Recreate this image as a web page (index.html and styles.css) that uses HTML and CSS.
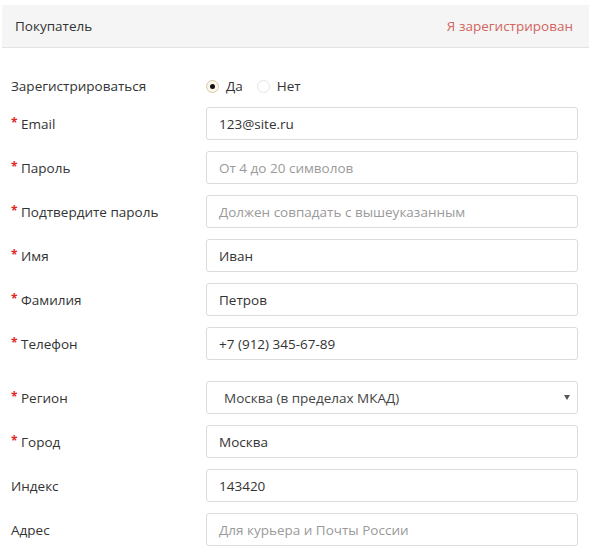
FILE: index.html
```html
<!DOCTYPE html>
<html lang="ru">
<head>
<meta charset="utf-8">
<title>Покупатель</title>
<link rel="stylesheet" href="styles.css">
</head>
<body>
<div class="panel">
  <div class="panel-head">
    <span class="title">Покупатель</span>
    <a class="login-link">Я зарегистрирован</a>
  </div>
  <form class="form">
    <div class="row row-radio">
      <label class="lbl">Зарегистрироваться</label>
      <div class="radios">
        <span class="radio checked"></span><span class="radio-text">Да</span>
        <span class="radio"></span><span class="radio-text">Нет</span>
      </div>
    </div>
    <div class="row">
      <label class="lbl"><span class="req">*</span>Email</label>
      <div class="input">123@site.ru</div>
    </div>
    <div class="row">
      <label class="lbl"><span class="req">*</span>Пароль</label>
      <div class="input ph">От 4 до 20 символов</div>
    </div>
    <div class="row">
      <label class="lbl"><span class="req">*</span>Подтвердите пароль</label>
      <div class="input ph">Должен совпадать с вышеуказанным</div>
    </div>
    <div class="row">
      <label class="lbl"><span class="req">*</span>Имя</label>
      <div class="input">Иван</div>
    </div>
    <div class="row">
      <label class="lbl"><span class="req">*</span>Фамилия</label>
      <div class="input">Петров</div>
    </div>
    <div class="row">
      <label class="lbl"><span class="req">*</span>Телефон</label>
      <div class="input">+7 (912) 345-67-89</div>
    </div>
    <div class="row row-select">
      <label class="lbl"><span class="req">*</span>Регион</label>
      <div class="select">Москва (в пределах МКАД)<span class="caret"></span></div>
    </div>
    <div class="row">
      <label class="lbl"><span class="req">*</span>Город</label>
      <div class="input">Москва</div>
    </div>
    <div class="row">
      <label class="lbl">Индекс</label>
      <div class="input">143420</div>
    </div>
    <div class="row">
      <label class="lbl">Адрес</label>
      <div class="input ph">Для курьера и Почты России</div>
    </div>
  </form>
</div>
</body>
</html>
```
FILE: styles.css
```css
html, body {
  margin: 0;
  padding: 0;
  background: #fff;
}
body {
  font-family: "Open Sans", "Noto Sans", sans-serif;
  font-size: 13.5px;
  color: #333;
}
.panel {
  padding: 5px 2px 0 2px;
}
.panel-head {
  height: 42px;
  background: #f5f5f5;
  border-bottom: 1px solid #e2e2e2;
  display: flex;
  align-items: center;
  justify-content: space-between;
  padding: 0 16px 0 13px;
}
.title {
  color: #333;
}
.login-link {
  color: #d2655e;
}
.form {
  display: flex;
  flex-direction: column;
  gap: 11px;
  padding: 29px 0 0 9px;
}
.row {
  display: grid;
  grid-template-columns: 195px 372px;
  align-items: center;
}
.row-radio {
  height: 16px;
  margin-bottom: 3px;
}
.row-select {
  margin-top: 10px;
}
.lbl {
  display: flex;
  align-items: center;
}
.req {
  color: #e3261f;
  font-weight: bold;
  width: 10px;
  font-size: 12px;
  position: relative;
  top: -1px;
}
.radios {
  display: flex;
  align-items: center;
}
.radio {
  width: 13px;
  height: 13px;
  border: 1px solid #e3e3e3;
  border-radius: 50%;
  background: #fff;
  box-sizing: border-box;
  position: relative;
  margin-right: 7px;
}
.radio.checked {
  border-color: #d8c8a8;
  background: #fbf6ea;
}
.radio.checked::after {
  content: "";
  position: absolute;
  left: 3px;
  top: 3px;
  width: 5px;
  height: 5px;
  border-radius: 50%;
  background: #111;
}
.radio-text {
  margin-right: 14px;
}
.input, .select {
  box-sizing: border-box;
  height: 33px;
  border: 1px solid #dcdcdc;
  border-radius: 3px;
  padding: 0 12px;
  display: flex;
  align-items: center;
  background: #fff;
  color: #333;
}
.input.ph {
  color: #9a9a9a;
}
.select {
  padding-left: 17px;
  justify-content: space-between;
  padding-right: 7px;
  color: #444;
}
.caret {
  width: 0;
  height: 0;
  border-left: 3px solid transparent;
  border-right: 3px solid transparent;
  border-top: 5px solid #555;
}
```
